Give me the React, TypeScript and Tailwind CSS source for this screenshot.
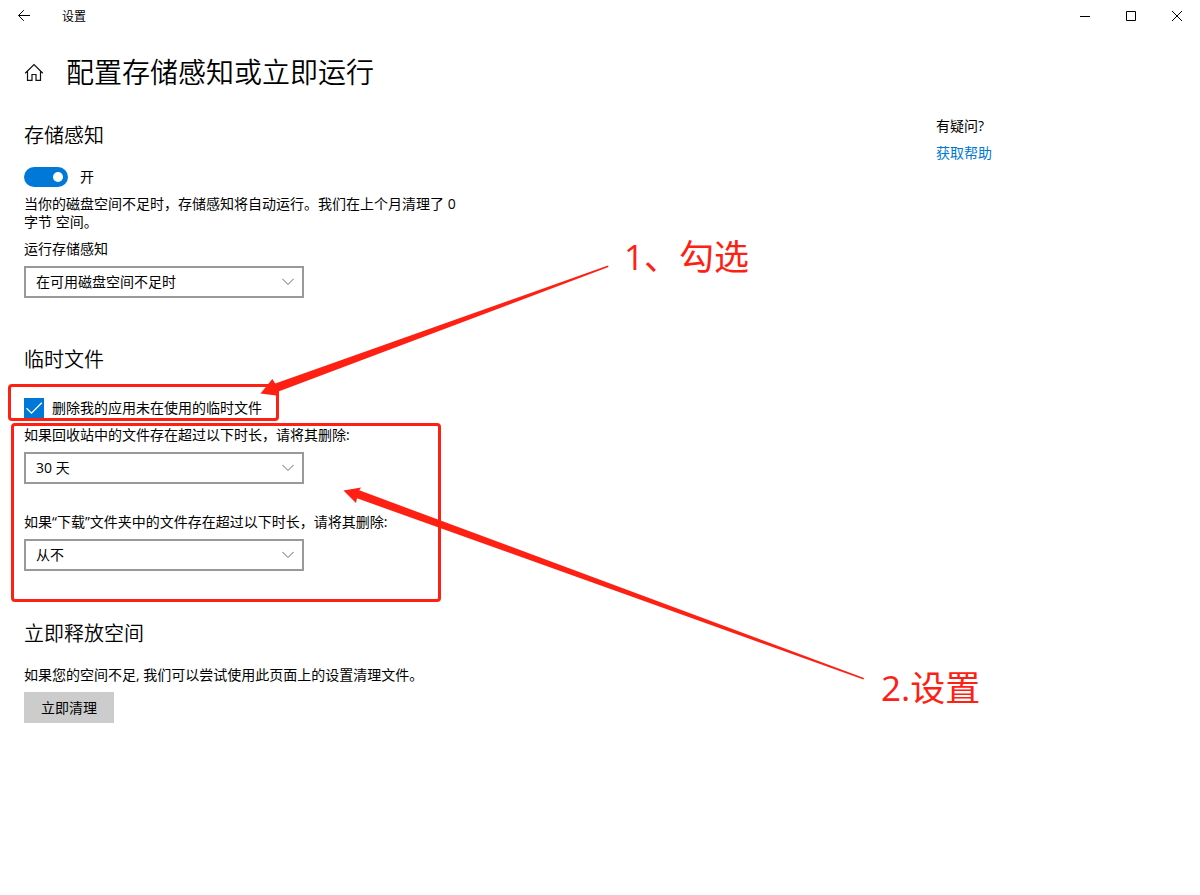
import type { ReactNode } from 'react';

function HomeIcon() {
  return (
    <svg width="20" height="20" viewBox="0 0 20 20" fill="none" stroke="#111" strokeWidth="1.2" aria-hidden="true">
      <path d="M1.2 11.3 L10 2.6 L18.8 11.3 M3.5 9.2 V18.4 H8 V12.5 H12 V18.4 H16.5 V9.2" />
    </svg>
  );
}

type SelectFieldProps = { id: string; label: string; options: string[]; value: string };

function SelectField({ id, label, options, value }: SelectFieldProps) {
  return (
    <div className="flex flex-col gap-2">
      <label htmlFor={id}>{label}</label>
      <div className="relative w-[280px]">
        <select
          id={id}
          defaultValue={value}
          className="block h-8 w-full appearance-none rounded-none border-2 border-[#999] bg-white pl-[10px] pr-8 text-black"
        >
          {options.map((o) => (
            <option key={o}>{o}</option>
          ))}
        </select>
        <svg className="pointer-events-none absolute right-[10px] top-3" width="12" height="8" viewBox="0 0 12 8" fill="none" stroke="#666" aria-hidden="true">
          <path d="M0.3 0.8 L6 6.5 L11.7 0.8" />
        </svg>
      </div>
    </div>
  );
}

function SectionTitle({ children }: { children: ReactNode }) {
  return <h2 className="text-[20px] leading-[30px] font-[350]">{children}</h2>;
}

function TitleBar() {
  return (
    <header className="flex h-8 items-center justify-between text-xs">
      <div className="flex items-center">
        <button type="button" aria-label="返回" className="flex h-8 w-12 items-center justify-center">
          <svg width="12" height="12" viewBox="0 0 12 12" fill="none" stroke="#000" aria-hidden="true">
            <path d="M5.8 0.2 L0.5 5.5 L5.8 10.8 M0.5 5.5 H12" />
          </svg>
        </button>
        <span className="pl-[14px] pt-px">设置</span>
      </div>
      <div className="flex">
        <button type="button" aria-label="最小化" className="flex h-8 w-[46px] items-center justify-center">
          <svg width="10" height="10" viewBox="0 0 10 10" stroke="#000" aria-hidden="true">
            <path d="M0 5.5 H10" />
          </svg>
        </button>
        <button type="button" aria-label="最大化" className="flex h-8 w-[46px] items-center justify-center">
          <svg width="10" height="10" viewBox="0 0 10 10" fill="none" stroke="#000" aria-hidden="true">
            <path d="M0.5 0.5 H9.5 V9.5 H0.5 Z" />
          </svg>
        </button>
        <button type="button" aria-label="关闭" className="flex h-8 w-[46px] items-center justify-center">
          <svg width="10" height="10" viewBox="0 0 10 10" stroke="#000" aria-hidden="true">
            <path d="M0 0 L10 10 M10 0 L0 10" />
          </svg>
        </button>
      </div>
    </header>
  );
}

function Annotations() {
  return (
    <div className="pointer-events-none absolute inset-0 overflow-hidden text-[35px] leading-10 text-[#ff2014]">
      <div className="absolute left-2 top-96 h-[37px] w-[271px] rounded-sm border-3 border-[#ff2014]" />
      <div className="absolute left-[11px] top-[423px] h-[179px] w-[430px] rounded-sm border-3 border-[#ff2014]" />
      <svg className="absolute left-0 top-0" width="1000" height="720" viewBox="0 0 1000 720" fill="#ff2014" aria-hidden="true">
        <path d="M260.5 393.5 L272.3 379 L275.3 383.6 L608 265.5 L608.5 267 L276.5 392.3 L276 395.5 Z" />
        <path d="M343.5 490.5 L361 487.5 L359.3 490.3 L864 678 L863.5 679.5 L357 498.3 L356 503 Z" />
      </svg>
      <p className="absolute left-[624px] top-[237px]">1、勾选</p>
      <p className="absolute left-[881px] top-[668px]">2.设置</p>
    </div>
  );
}

export default function App() {
  return (
    <div className="relative min-h-screen bg-white font-['Open_Sans','Noto_Sans_CJK_SC',sans-serif] text-sm leading-[18px] text-black">
      <TitleBar />
      <div className="flex items-center gap-[22px] px-6 pt-5">
        <a href="#home" aria-label="主页">
          <HomeIcon />
        </a>
        <h1 className="text-[28px] leading-10 font-[350]">配置存储感知或立即运行</h1>
      </div>
      <div className="flex justify-between pl-6 pt-[25px]">
        <main className="max-w-[440px] pt-1">
          <section>
            <SectionTitle>存储感知</SectionTitle>
            <label className="mt-4 flex items-center gap-3">
              <input type="checkbox" role="switch" defaultChecked className="sr-only" />
              <span className="flex h-5 w-11 items-center justify-end rounded-full bg-[#0078d7] px-[5px]">
                <span className="size-[10px] rounded-full bg-white" />
              </span>
              <span>开</span>
            </label>
            <p className="mt-2 mb-[9px]">当你的磁盘空间不足时，存储感知将自动运行。我们在上个月清理了 0 字节 空间。</p>
            <SelectField id="run" label="运行存储感知" value="在可用磁盘空间不足时" options={['在可用磁盘空间不足时', '每天', '每周', '每月']} />
          </section>
          <section className="mt-[47px]">
            <SectionTitle>临时文件</SectionTitle>
            <label className="mt-[23px] mb-2 flex items-center gap-2">
              <span className="relative flex size-5">
                <input type="checkbox" defaultChecked className="size-5 appearance-none bg-[#0078d7]" />
                <svg className="pointer-events-none absolute inset-0" width="20" height="20" viewBox="0 0 20 20" fill="none" stroke="#fff" strokeWidth="1.3" aria-hidden="true">
                  <path d="M2.5 10.2 L7.5 15.2 L17.8 4.8" />
                </svg>
              </span>
              <span>删除我的应用未在使用的临时文件</span>
            </label>
            <div className="flex flex-col gap-[29px]">
              <SelectField id="bin" label="如果回收站中的文件存在超过以下时长，请将其删除:" value="30 天" options={['从不', '1 天', '14 天', '30 天', '60 天']} />
              <SelectField id="downloads" label="如果“下载”文件夹中的文件存在超过以下时长，请将其删除:" value="从不" options={['从不', '1 天', '14 天', '30 天', '60 天']} />
            </div>
          </section>
          <section className="mt-12">
            <SectionTitle>立即释放空间</SectionTitle>
            <p className="mt-[17px] mb-2">如果您的空间不足, 我们可以尝试使用此页面上的设置清理文件。</p>
            <button type="button" className="h-[31px] w-[90px] bg-[#ccc]">立即清理</button>
          </section>
        </main>
        <aside className="flex w-[264px] flex-col items-start gap-[9px]">
          <p>有疑问?</p>
          <a href="#help" className="text-[#0078d7]">获取帮助</a>
        </aside>
      </div>
      <Annotations />
    </div>
  );
}
